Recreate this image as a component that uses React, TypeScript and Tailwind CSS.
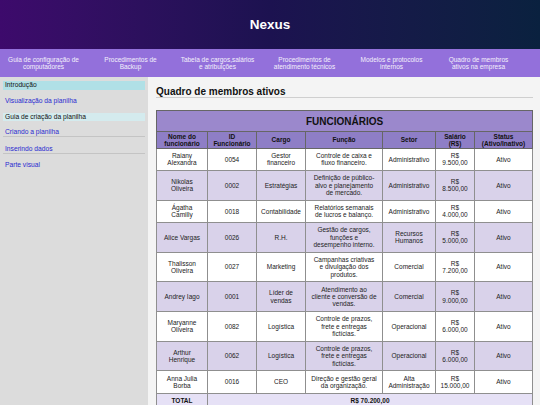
import React from "react";

const navItems: string[][] = [
  ["Guia de configuração de", "computadores"],
  ["Procedimentos de", "Backup"],
  ["Tabela de cargos,salários", "e atribuições"],
  ["Procedimentos de", "atendimento técnicos"],
  ["Modelos e protocolos", "internos"],
  ["Quadro de membros", "ativos na empresa"],
];

type Row = string[][];

const rows: Row[] = [
  [["Raiany", "Alexandra"], ["0054"], ["Gestor", "financeiro"], ["Controle de caixa e", "fluxo financeiro."], ["Administrativo"], ["R$", "9.500,00"], ["Ativo"]],
  [["Nikolas", "Oliveira"], ["0002"], ["Estratégias"], ["Definição de público-", "alvo e planejamento", "de mercado."], ["Administrativo"], ["R$", "8.500,00"], ["Ativo"]],
  [["Ágatha", "Camilly"], ["0018"], ["Contabilidade"], ["Relatórios semanais", "de lucros e balanço."], ["Administrativo"], ["R$", "4.000,00"], ["Ativo"]],
  [["Alice Vargas"], ["0026"], ["R.H."], ["Gestão de cargos,", "funções e", "desempenho interno."], ["Recursos", "Humanos"], ["R$", "5.000,00"], ["Ativo"]],
  [["Thalisson", "Oliveira"], ["0027"], ["Marketing"], ["Campanhas criativas", "e divulgação dos", "produtos."], ["Comercial"], ["R$", "7.200,00"], ["Ativo"]],
  [["Andrey Iago"], ["0001"], ["Líder de", "vendas"], ["Atendimento ao", "cliente e conversão de", "vendas."], ["Comercial"], ["R$", "9.000,00"], ["Ativo"]],
  [["Maryanne", "Oliveira"], ["0082"], ["Logística"], ["Controle de prazos,", "frete e entregas", "fictícias."], ["Operacional"], ["R$", "6.000,00"], ["Ativo"]],
  [["Arthur", "Henrique"], ["0062"], ["Logística"], ["Controle de prazos,", "frete e entregas", "fictícias."], ["Operacional"], ["R$", "6.000,00"], ["Ativo"]],
  [["Anna Julia", "Borba"], ["0016"], ["CEO"], ["Direção e gestão geral", "da organização."], ["Alta", "Administração"], ["R$", "15.000,00"], ["Ativo"]],
];

const headers: string[][] = [
  ["Nome do", "funcionário"],
  ["ID", "Funcionário"],
  ["Cargo"],
  ["Função"],
  ["Setor"],
  ["Salário", "(R$)"],
  ["Status", "(Ativo/Inativo)"],
];

const widths = [51, 49, 49, 77, 53, 39, 58];

function Lines({ lines }: { lines: string[] }) {
  return (
    <>
      {lines.map((l, i) => (
        <React.Fragment key={i}>
          {i > 0 && <br />}
          {l}
        </React.Fragment>
      ))}
    </>
  );
}

export default function App() {
  return (
    <div className="h-screen overflow-hidden flex flex-col bg-[#f4f4f4] text-[#222]" style={{ fontFamily: '"Liberation Sans", Arial, sans-serif' }}>
      <header className="h-[49px] shrink-0 flex items-center justify-center bg-linear-to-r from-[#3d0a6c] via-[#1c1250] to-[#0a213f]">
        <h1 className="text-white font-bold text-[13.5px] leading-none">Nexus</h1>
      </header>
      <nav className="h-[28px] shrink-0 bg-[#9370db] flex items-center">
        {navItems.map((it, i) => (
          <div key={i} className="w-[87px] text-center text-[6.5px] leading-[7.5px] text-[#f4f0fb] whitespace-nowrap">
            <Lines lines={it} />
          </div>
        ))}
      </nav>
      <div className="flex flex-1 min-h-0">
        <aside className="w-[148px] shrink-0 bg-[#dcdcdc] px-[3px] pt-[4px] text-[6.7px]">
          <div className="bg-[#b0e0e6] h-[8.5px] leading-[8.5px] px-[2px] text-[#111]">Introdução</div>
          <div className="pt-[7px] pb-[1px] leading-[8px] px-[2px] text-[#2a2ad0]">Visualização da planilha</div>
          <div className="mt-[7px] bg-[#d4ebee] h-[8px] leading-[8px] px-[2px] text-[#111]">Guia de criação da planilha</div>
          <div className="pt-[7.5px] leading-[8px] px-[2px] text-[#2a2ad0] border-b border-[#c4c4c4]">Criando a planilha</div>
          <div className="pt-[7.5px] leading-[8px] px-[2px] text-[#2a2ad0] border-b border-[#c4c4c4]">Inserindo dados</div>
          <div className="pt-[7.5px] leading-[8px] px-[2px] text-[#2a2ad0]">Parte visual</div>
        </aside>
        <main className="flex-1 px-[8px] pt-[9.5px]">
          <h2 className="text-[10px] leading-[10px] font-bold text-[#111] border-b border-[#cfcfcf] pb-[0.5px]">Quadro de membros ativos</h2>
          <table className="mt-[12px] w-[376px] table-fixed border-collapse border border-[#666] text-[6.5px] leading-[7.3px] text-center">
            <colgroup>
              {widths.map((w, i) => (
                <col key={i} style={{ width: w }} />
              ))}
            </colgroup>
            <thead>
              <tr className="bg-[#9b88cc]">
                <th colSpan={7} className="border border-[#666] text-[10px] leading-[11px] font-bold py-[4.5px] text-[#111]">FUNCIONÁRIOS</th>
              </tr>
              <tr className="bg-[#8e7ec6]">
                {headers.map((h, i) => (
                  <th key={i} className="border border-[#666] font-bold py-[0.5px] whitespace-nowrap text-[#111]">
                    <Lines lines={h} />
                  </th>
                ))}
              </tr>
            </thead>
            <tbody>
              {rows.map((r, ri) => (
                <tr key={ri} className={ri % 2 === 0 ? "bg-white" : "bg-[#d9d2ea]"}>
                  {r.map((c, ci) => (
                    <td key={ci} className="border border-[#8f8f8f] py-[3.4px] whitespace-nowrap">
                      <Lines lines={c} />
                    </td>
                  ))}
                </tr>
              ))}
              <tr className="bg-[#e6e1f6]">
                <td className="border border-[#8f8f8f] py-[3.4px] font-bold text-[#111]">TOTAL</td>
                <td colSpan={6} className="border border-[#8f8f8f] py-[3.4px] font-bold text-[#111]">R$ 70.200,00</td>
              </tr>
            </tbody>
          </table>
        </main>
      </div>
    </div>
  );
}
